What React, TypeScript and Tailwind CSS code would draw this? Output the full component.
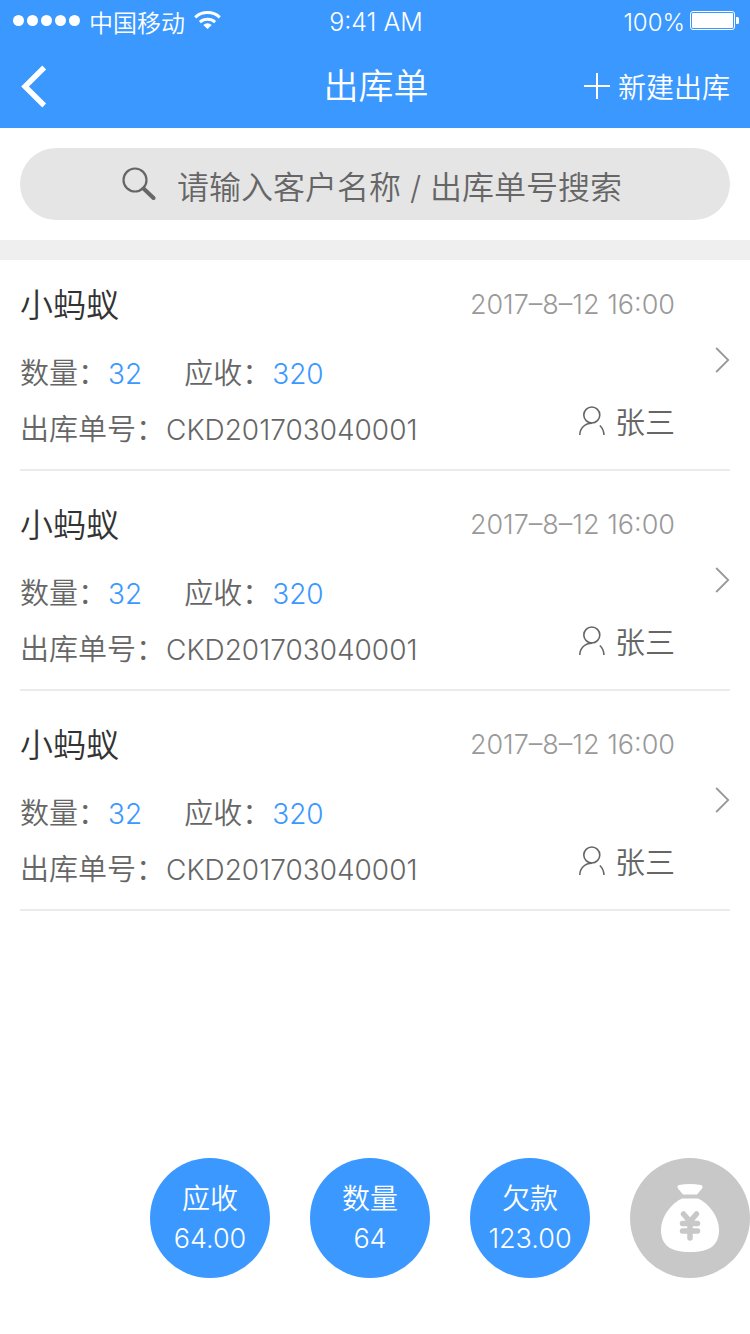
import React from "react";

type Order = {
  id: number;
  customer: string;
  time: string;
  quantity: number;
  receivable: number;
  code: string;
  operator: string;
};

const orders: Order[] = [1, 2, 3].map((id) => ({
  id,
  customer: "小蚂蚁",
  time: "2017–8–12 16:00",
  quantity: 32,
  receivable: 320,
  code: "CKD201703040001",
  operator: "张三",
}));

const totals = [
  { label: "应收", value: "64.00" },
  { label: "数量", value: "64" },
  { label: "欠款", value: "123.00" },
];

function StatusBar() {
  return (
    <div className="grid h-10 grid-cols-[1fr_auto_1fr] items-center pt-1 pr-[11px] pl-[13px] text-2xl leading-9">
      <div className="flex items-center">
        <div className="mr-[9px] mb-[6px] flex gap-[3px]">
          {[0, 1, 2, 3, 4].map((dot) => (
            <span key={dot} className="size-[11px] rounded-full bg-white" />
          ))}
        </div>
        <span className="pt-[2px]">中国移动</span>
        <svg className="mb-[6px] ml-[9px] h-[18px] w-[27px]" viewBox="0 0 27 18" fill="none" stroke="white" aria-hidden="true">
          <path d="M1.200 6.300a18.500 18.500 0 0 1 24.600 0" strokeWidth="3" />
          <path d="M5.900 11.200a11.500 11.500 0 0 1 15.200 0" strokeWidth="3" />
          <path d="M13.500 18l-4.200-4.100a6 6 0 0 1 8.400 0z" fill="white" stroke="none" />
        </svg>
      </div>
      <span className="pb-[2px] text-[25px]">9:41 AM</span>
      <div className="flex items-center justify-end gap-[5px]">
        <span>100%</span>
        <svg className="mb-[6px] h-[19px] w-[49px]" viewBox="0 0 49 19" aria-hidden="true">
          <rect x="0.5" y="0.5" width="44" height="18" rx="2.5" fill="none" stroke="white" />
          <rect x="2" y="2" width="41" height="15" rx="1" fill="white" />
          <path d="M46 6h1.500q1.500 0 1.500 1.500v4q0 1.500-1.500 1.500H46z" fill="white" />
        </svg>
      </div>
    </div>
  );
}

function NavBar() {
  return (
    <div className="grid h-[88px] grid-cols-[1fr_auto_1fr] items-center px-5 pt-1">
      <button type="button" aria-label="返回" className="justify-self-start">
        <svg className="h-[43px] w-7" viewBox="0 0 28 43" fill="none" stroke="white" strokeWidth="5.400" aria-hidden="true">
          <path d="M24.200 2.500L5 21.500l19.200 19" />
        </svg>
      </button>
      <h1 className="pl-[2px] text-[35px] leading-[44px]">出库单</h1>
      <button type="button" className="flex items-center gap-2 justify-self-end text-[28px] leading-10">
        <svg className="size-[26px]" viewBox="0 0 26 26" stroke="white" strokeWidth="2" aria-hidden="true">
          <path d="M0 13h26M13 0v26" />
        </svg>
        <span className="pt-1">新建出库</span>
      </button>
    </div>
  );
}

function OrderItem({ order }: { order: Order }) {
  return (
    <li className="border-b-2 border-[#ebebeb] pt-8 pb-5 first:pt-[23px]">
      <a href={`#order-${order.id}`} className="flex items-center justify-between">
        <div className="flex flex-col">
          <h2 className="mb-[26px] text-[33px] leading-[45px] text-[#333]">{order.customer}</h2>
          <p className="mb-4 flex gap-[42px] text-[29px] leading-10">
            <span>
              数量：<span className="ml-px text-[28px] text-[#3b98ff]">{order.quantity}</span>
            </span>
            <span>
              应收：<span className="ml-px text-[28px] text-[#3b98ff]">{order.receivable}</span>
            </span>
          </p>
          <p className="-mb-px text-[29px] leading-10">
            出库单号：<span className="ml-px text-[28px]">{order.code}</span>
          </p>
        </div>
        <div className="flex items-center gap-10">
          <div className="flex flex-col items-end gap-[77px] pb-[6px]">
            <time className="text-[27px] leading-10 text-[#999]">{order.time}</time>
            <span className="flex items-center gap-[10px] text-[30px] leading-10">
              <svg className="mb-[2px] h-[30px] w-[26px]" viewBox="0 0 26 30" fill="none" stroke="#666" strokeWidth="1.600" aria-hidden="true">
                <circle cx="12.800" cy="9" r="8" />
                <path d="M13 17.200C6 17.200 0.800 22 0.800 29M20.800 19.500c2.600 2.300 4 5.500 4.200 9.500" />
              </svg>
              {order.operator}
            </span>
          </div>
          <svg className="mb-3 h-[26px] w-[15px]" viewBox="0 0 15 26" fill="none" stroke="#999" strokeWidth="1.800" aria-hidden="true">
            <path d="M1.200 1L13.200 13L1.200 25" />
          </svg>
        </div>
      </a>
    </li>
  );
}

export default function App() {
  return (
    <div className="flex min-h-screen flex-col bg-white font-['Inter','Noto_Sans_CJK_SC',sans-serif] font-[350] text-[#666]">
      <header className="bg-[#3b98ff] text-white">
        <StatusBar />
        <NavBar />
      </header>

      <div className="border-b-20 border-[#efefef] p-5">
        <label className="flex h-[72px] items-center justify-center rounded-full bg-[#e5e5e5] pr-[6px]">
          <svg className="mr-[21px] size-[34px]" viewBox="0 0 34 34" fill="none" stroke="#666" aria-hidden="true">
            <circle cx="13" cy="13" r="11.500" strokeWidth="2.200" />
            <path d="M21.500 21.500L31.500 31" strokeWidth="4" strokeLinecap="round" />
          </svg>
          <input
            type="search"
            aria-label="搜索出库单"
            placeholder="请输入客户名称 / 出库单号搜索"
            className="field-sizing-content bg-transparent pt-1 text-[32px] leading-[48px] outline-none placeholder:text-[#666] placeholder:opacity-100"
          />
        </label>
      </div>

      <main className="flex-1">
        <ul className="px-5">
          {orders.map((order) => (
            <OrderItem key={order.id} order={order} />
          ))}
        </ul>
      </main>

      <footer className="flex justify-end gap-10 pt-10 pb-14 text-white">
        {totals.map((total) => (
          <div
            key={total.label}
            className="flex size-[120px] flex-col items-center justify-center rounded-full bg-[#3b98ff] pt-[2px] leading-10"
          >
            <span className="text-[28px]">{total.label}</span>
            <span className="text-[27px]">{total.value}</span>
          </div>
        ))}
        <button type="button" aria-label="收款" className="flex size-[120px] items-center justify-center rounded-full bg-[#c8c8c8]">
          <svg className="h-[68px] w-[58px]" viewBox="0 0 58 68" fill="white" aria-hidden="true">
            <path d="M18 1Q29-1 40 1Q42.500 2 41 4.500L36 10.500H22L17 4.500Q15.500 2 18 1z" />
            <path d="M21 14.500H37C47 19 58 32 58 46C58 61 49 68 29 68S0 61 0 46C0 32 11 19 21 14.500z" />
            <path
              d="M22.500 30l6.500 7.500L35.500 30M21.500 39.500h15M21.500 47h15M29 38v16"
              fill="none"
              stroke="#c8c8c8"
              strokeWidth="5.500"
              strokeLinecap="round"
            />
          </svg>
        </button>
      </footer>
    </div>
  );
}
